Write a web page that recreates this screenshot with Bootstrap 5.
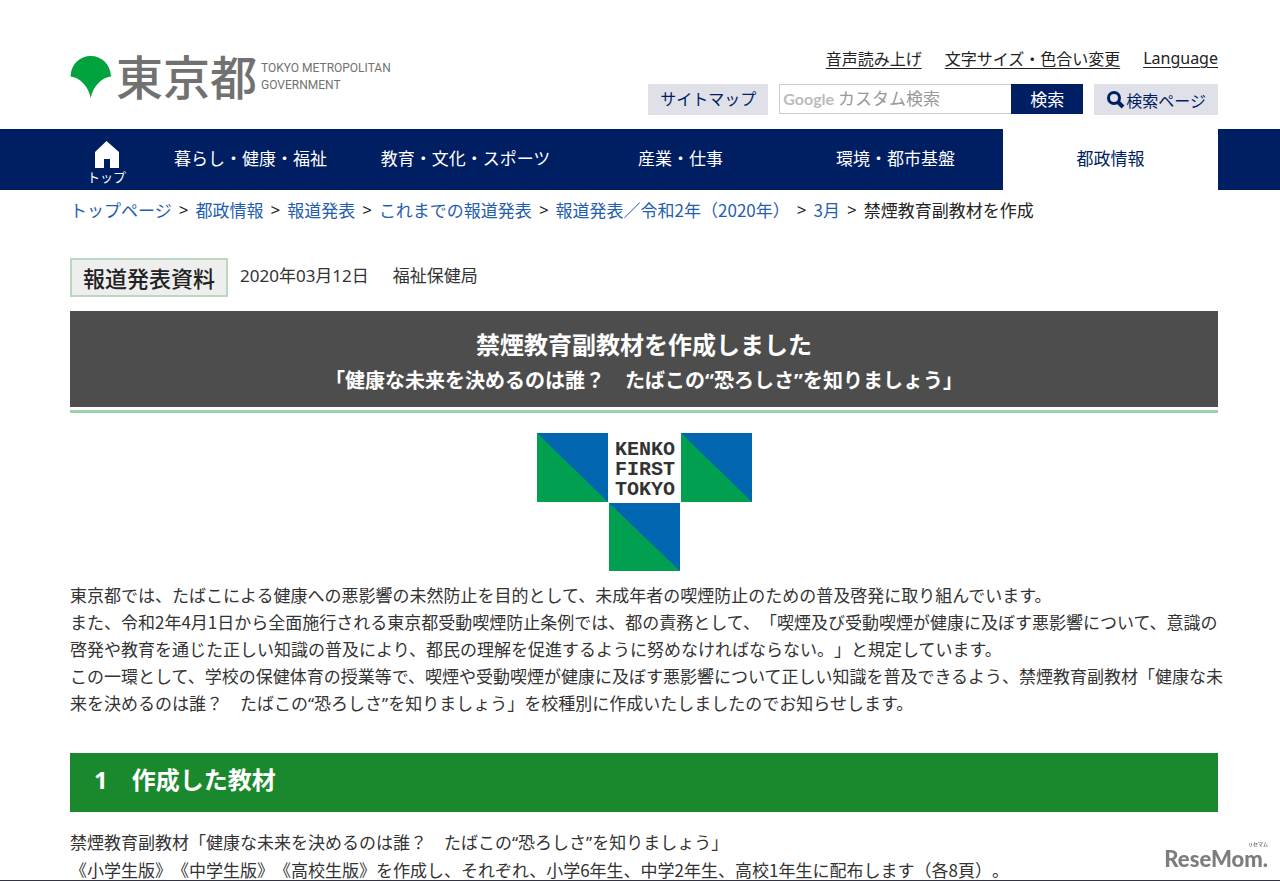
<!DOCTYPE html>
<html lang="ja">
<head>
<meta charset="utf-8">
<meta name="viewport" content="width=device-width, initial-scale=1">
<title>禁煙教育副教材を作成|東京都</title>
<link href="https://cdn.jsdelivr.net/npm/bootstrap@5.3.0/dist/css/bootstrap.min.css" rel="stylesheet">
<style>
:root{--navy:#001e62;--jp:"Noto Sans","Noto Sans CJK JP",sans-serif}
body{font-family:"Noto Sans CJK JP",sans-serif;font-size:17px;line-height:27px;color:#333;background:#fff;overflow-x:hidden;text-spacing-trim:space-all}
.wrap{padding-left:70px;padding-right:62px}
.site-head{height:129px}
.logo{margin-top:52px;color:#717171;text-decoration:none}
.logo-jp{font-size:47px;line-height:46px;padding-bottom:4px;font-weight:500}
.logo-en{font-family:Roboto,sans-serif;font-size:12px;line-height:17px}
.tools{margin-top:45px}
.tools-links{gap:23px;font-size:16px}
.tools-links a{color:#222;text-underline-offset:3px}
.latin{font-family:var(--jp)}
.tool-btn{background:#dfe0e8;color:var(--navy);height:31px;line-height:28px;font-size:16px;border:0;border-radius:0;padding:0 12px;text-decoration:none}
.search{width:304px;height:30px;margin:0 11px}
.search input{border:1px solid #ccc;border-right:0;border-radius:0;height:30px;padding:0 4px;font-size:17px;min-width:0}
.search label{left:4px;top:0;color:#999;line-height:28px;pointer-events:none;z-index:6}
.search label b{font-family:Lato,sans-serif;font-size:16px;color:#bbb}
.search button{background:var(--navy);color:#fff;border:0;border-radius:0;width:72px;height:30px;font-size:17px;line-height:26px;padding:0}
.gnav{background:var(--navy)}
.gnav a{color:#fff;text-decoration:none;height:61px;line-height:57px;text-align:center;flex:1 1 0;display:block}
.gnav a.home{flex:0 0 73px;font-size:13px;line-height:17px;padding-top:12px}
.gnav .home svg{display:block;margin:0 auto}
.gnav a.current{background:#fff;color:var(--navy)}
.crumbs{padding-top:6px;gap:7px;color:#222}
.crumbs a{color:#1f5eb0;text-decoration:none}
.sep{font-family:var(--jp)}
.meta{margin-top:35px;gap:12px}
.press{border:2px solid #b9d8c2;background:#eee;color:#222;font-size:22px;line-height:34px;padding:0 11px;font-weight:500;height:39px}
.date{font-family:var(--jp);line-height:35px}
.bureau{margin-left:12px}
.title-box{background:#4d4d4d;color:#fff;margin-top:14px;padding:15px 0 6px;text-align:center}
.title-box h1{font-size:24px;line-height:35px;font-weight:700;margin:0}
.title-box p{font-size:20px;line-height:40px;font-weight:700;margin:0;font-family:var(--jp)}
.title-rule{height:3px;background:#9fd0ac;margin-top:3px}
.emblem{display:block;margin:20px auto 10px}
.copy{white-space:nowrap;margin:0}
.q{font-family:var(--jp)}
.section-title{background:#1a892e;color:#fff;font-size:24px;line-height:52px;font-weight:700;margin:36px 0 16px;height:59px;padding-left:24px}
.watermark{right:12px;bottom:10px;z-index:10;color:#7d7d7d;font:900 22px/25px Lato,sans-serif}
.watermark small{font:700 5px/8px "Noto Sans CJK JP",sans-serif;margin-bottom:-2px}
.edge{height:1px;background:#334}
</style>
</head>
<body>
<header class="wrap site-head d-flex justify-content-between align-items-start">
  <a href="#" class="logo d-flex align-items-center">
    <svg width="42" height="44" viewBox="0 0 42 44" aria-hidden="true"><path d="M.5 21.500C1 9 10 1 20.700 1S40.500 9 41 21.500C32 22.500 23 31 20.700 43C18.500 31 9.500 22.500 .5 21.500Z" fill="#00a33e"/></svg>
    <span class="logo-jp ms-1">東京都</span>
    <span class="logo-en ms-1">TOKYO METROPOLITAN<br>GOVERNMENT</span>
  </a>
  <div class="tools">
    <div class="tools-links d-flex justify-content-end"><a href="#">音声読み上げ</a><a href="#">文字サイズ・色合い変更</a><a href="#" class="latin">Language</a></div>
    <div class="d-flex justify-content-end mt-2 pt-1">
      <a href="#" class="tool-btn">サイトマップ</a>
      <form class="search d-flex position-relative" onsubmit="return false">
        <label for="q" class="position-absolute"><b>Google</b> カスタム検索</label>
        <input id="q" type="text" class="form-control flex-fill">
        <button type="submit" class="btn flex-shrink-0">検索</button>
      </form>
      <a href="#" class="tool-btn d-flex align-items-center"><svg width="20" height="19" viewBox="0 0 20 19" aria-hidden="true"><circle cx="8" cy="8" r="5.500" fill="none" stroke="#001e62" stroke-width="3"/><path d="M12 12l5 5" stroke="#001e62" stroke-width="4"/></svg><span>検索ページ</span></a>
    </div>
  </div>
</header>
<nav class="gnav wrap d-flex">
  <a href="#" class="home"><svg width="26" height="27" viewBox="0 0 26 27" aria-hidden="true"><path d="M12.500 0L25 11V27H16V18H10V27H1V11Z" fill="#fff"/></svg>トップ</a>
  <a href="#">暮らし・健康・福祉</a><a href="#">教育・文化・スポーツ</a><a href="#">産業・仕事</a><a href="#">環境・都市基盤</a><a href="#" class="current">都政情報</a>
</nav>
<main class="wrap">
  <nav class="crumbs d-flex text-nowrap" aria-label="パンくず"><a href="#">トップページ</a><span class="sep">&gt;</span><a href="#">都政情報</a><span class="sep">&gt;</span><a href="#">報道発表</a><span class="sep">&gt;</span><a href="#">これまでの報道発表</a><span class="sep">&gt;</span><a href="#">報道発表／令和2年（2020年）</a><span class="sep">&gt;</span><a href="#">3月</a><span class="sep">&gt;</span><span>禁煙教育副教材を作成</span></nav>
  <div class="meta d-flex"><span class="press">報道発表資料</span><span class="date">2020年03月12日</span><span class="date bureau">福祉保健局</span></div>
  <div class="title-box"><h1>禁煙教育副教材を作成しました</h1><p>「健康な未来を決めるのは誰？　たばこの“恐ろしさ”を知りましょう」</p></div>
  <div class="title-rule"></div>
  <svg class="emblem" width="215" height="138" viewBox="0 0 215 138" role="img" aria-label="KENKO FIRST TOKYO">
    <path d="M0 0H71V69H0ZM144 0H215V69H144ZM72 70H143V138H72Z" fill="#0066b0"/>
    <path d="M0 0L71 69H0ZM144 0L215 69H144ZM72 70L143 138H72Z" fill="#00a050"/>
    <g font-family="Liberation Mono, monospace" font-weight="700" font-size="20" fill="#333"><text x="78" y="22">KENKO</text><text x="78" y="42">FIRST</text><text x="78" y="62">TOKYO</text></g>
  </svg>
  <p class="copy">東京都では、たばこによる健康への悪影響の未然防止を目的として、未成年者の喫煙防止のための普及啓発に取り組んでいます。<br>また、令和2年4月1日から全面施行される東京都受動喫煙防止条例では、都の責務として、「喫煙及び受動喫煙が健康に及ぼす悪影響について、意識の<br>啓発や教育を通じた正しい知識の普及により、都民の理解を促進するように努めなければならない。」と規定しています。<br>この一環として、学校の保健体育の授業等で、喫煙や受動喫煙が健康に及ぼす悪影響について正しい知識を普及できるよう、禁煙教育副教材「健康な未<br>来を決めるのは誰？　たばこの<span class="q">“</span>恐ろしさ<span class="q">”</span>を知りましょう」を校種別に作成いたしましたのでお知らせします。</p>
  <h2 class="section-title"><span class="q">1</span>　作成した教材</h2>
  <p class="copy">禁煙教育副教材「健康な未来を決めるのは誰？　たばこの<span class="q">“</span>恐ろしさ<span class="q">”</span>を知りましょう」<br>《小学生版》《中学生版》《高校生版》を作成し、それぞれ、小学6年生、中学2年生、高校1年生に配布します（各8頁）。</p>
</main>
<div class="watermark position-fixed d-flex flex-column align-items-end"><small>リセマム</small><span>ReseMom.</span></div>
<div class="edge position-fixed bottom-0 start-0 end-0"></div>
<script src="https://cdn.jsdelivr.net/npm/bootstrap@5.3.0/dist/js/bootstrap.bundle.min.js"></script>
</body>
</html>
